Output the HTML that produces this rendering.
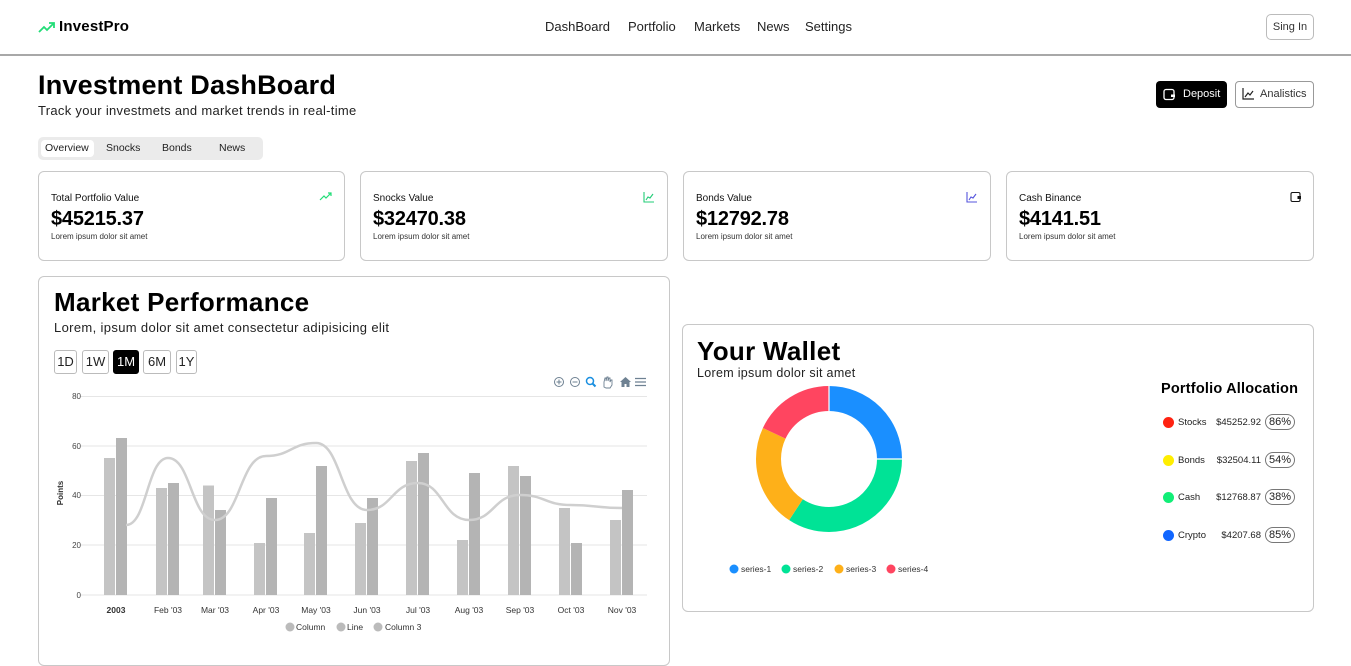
<!DOCTYPE html>
<html><head><meta charset="utf-8"><style>
*{box-sizing:border-box;margin:0;padding:0}
body{width:1351px;height:648px;overflow:hidden;background:#fff;font-family:"Liberation Sans",sans-serif;color:#000;position:relative}
.a{position:absolute}
.card{position:absolute;border:1px solid #c8c8c8;border-radius:6px;background:#fff}
.nav a{position:absolute;top:19px;font-size:13px;color:#222}
.t{font-size:10px;position:absolute;left:12px;top:21px;color:#111}
.v{font-size:20px;font-weight:bold;position:absolute;left:12px;top:36px;letter-spacing:-0.2px}
.s{font-size:8px;position:absolute;left:12px;top:60px;color:#333}
.rb{position:absolute;top:350px;height:24px;border:1px solid #bbb;border-radius:3px;font-size:13px;text-align:center;line-height:22px;color:#222}
.al{position:absolute;left:1163px;font-size:9.5px;color:#222;width:134px;height:18px}
.al i{position:absolute;left:0;top:2px;width:11px;height:11px;border-radius:50%}
.al .n{position:absolute;left:15px;top:2px}
.al .m{position:absolute;right:36px;top:2px}
.al .p{position:absolute;right:2px;top:-1px;border:1px solid #777;border-radius:9px;padding:1px 3px;font-size:11px}
</style></head><body>
<svg class="a" style="left:38px;top:20px" width="18" height="14" viewBox="0 0 18 14"><path d="M1 12 L6 7 L9 10 L16 3 M11 3 H16 V8" fill="none" stroke="#22dd77" stroke-width="1.8"/></svg>
<div class="a" style="left:59px;top:18px;font-size:15px;font-weight:bold;letter-spacing:0.2px">InvestPro</div>
<div class="nav"><a style="left:545px">DashBoard</a><a style="left:628px">Portfolio</a><a style="left:694px">Markets</a><a style="left:757px">News</a><a style="left:805px">Settings</a></div>
<div class="a" style="left:1266px;top:14px;width:48px;height:26px;border:1px solid #bbb;border-radius:5px;font-size:11px;text-align:center;line-height:24px;color:#333">Sing In</div>
<div class="a" style="left:0;top:54px;width:1351px;height:2px;background:#a8a8a8"></div>

<div class="a" style="left:38px;top:70px;font-size:27px;font-weight:bold;letter-spacing:0.2px">Investment DashBoard</div>
<div class="a" style="left:38px;top:103px;font-size:13px;color:#222;letter-spacing:0.3px">Track your investmets and market trends in real-time</div>
<div class="a" style="left:38px;top:137px;width:225px;height:23px;background:#ebebeb;border-radius:5px"></div>
<div class="a" style="left:41px;top:140px;width:53px;height:17px;background:#fff;border-radius:4px"></div>
<div class="a" style="left:45px;top:142px;font-size:10.5px;color:#222">Overview</div>
<div class="a" style="left:106px;top:142px;font-size:10.5px;color:#222">Snocks</div>
<div class="a" style="left:162px;top:142px;font-size:10.5px;color:#222">Bonds</div>
<div class="a" style="left:219px;top:142px;font-size:10.5px;color:#222">News</div>

<div class="a" style="left:1156px;top:81px;width:71px;height:27px;background:#000;border-radius:4px;color:#fff;font-size:11px;line-height:27px;padding-left:27px">Deposit</div>
<svg class="a" style="left:1163px;top:88px" width="13" height="13" viewBox="0 0 13 13"><rect x="1" y="1.5" width="10" height="10" rx="2" fill="none" stroke="#fff" stroke-width="1.3"/><path d="M8 6.5 H12 V9 H8 Z" fill="#fff"/></svg>
<div class="a" style="left:1235px;top:81px;width:79px;height:27px;border:1px solid #999;border-radius:4px;font-size:11px;line-height:25px;padding-left:24px;color:#333">Analistics</div>
<svg class="a" style="left:1242px;top:87px" width="13" height="13" viewBox="0 0 13 13"><path d="M1 1 V12 H12 M3 10 L6 6 L8 8 L11 4" fill="none" stroke="#222" stroke-width="1.2"/></svg>

<div class="card" style="left:38px;top:171px;width:307px;height:90px"><div class="t">Total Portfolio Value</div><div class="v">$45215.37</div><div class="s">Lorem ipsum dolor sit amet</div>
<svg class="a" style="left:280px;top:19px" width="14" height="11"><path d="M1 9 L5 5 L7 7 L12 2 M9 2 H12 V5" fill="none" stroke="#22dd77" stroke-width="1.2"/></svg></div>
<div class="card" style="left:360px;top:171px;width:308px;height:90px"><div class="t">Snocks Value</div><div class="v">$32470.38</div><div class="s">Lorem ipsum dolor sit amet</div>
<svg class="a" style="left:282px;top:19px" width="12" height="12"><path d="M1 1 V11 H11 M3 9 L5 6 L7 7 L10 3" fill="none" stroke="#22cc77" stroke-width="1.1"/></svg></div>
<div class="card" style="left:683px;top:171px;width:308px;height:90px"><div class="t">Bonds Value</div><div class="v">$12792.78</div><div class="s">Lorem ipsum dolor sit amet</div>
<svg class="a" style="left:282px;top:19px" width="12" height="12"><path d="M1 1 V11 H11 M3 9 L5 6 L7 7 L10 3" fill="none" stroke="#5555dd" stroke-width="1.1"/></svg></div>
<div class="card" style="left:1006px;top:171px;width:308px;height:90px"><div class="t">Cash Binance</div><div class="v">$4141.51</div><div class="s">Lorem ipsum dolor sit amet</div>
<svg class="a" style="left:283px;top:19px" width="12" height="12"><rect x="1" y="1.5" width="9" height="9" rx="1.5" fill="none" stroke="#111" stroke-width="1.1"/><rect x="7.5" y="5" width="3.5" height="3" fill="#111"/></svg></div>

<div class="card" style="left:38px;top:276px;width:632px;height:390px"></div>
<div class="a" style="left:54px;top:287px;font-size:26px;font-weight:bold;letter-spacing:0.3px">Market Performance</div>
<div class="a" style="left:54px;top:320px;font-size:13px;color:#222;letter-spacing:0.35px">Lorem, ipsum dolor sit amet consectetur adipisicing elit</div>
<div class="rb" style="left:54px;width:23px">1D</div>
<div class="rb" style="left:82px;width:27px">1W</div>
<div class="rb" style="left:113px;width:26px;background:#000;color:#fff;border-color:#000">1M</div>
<div class="rb" style="left:143px;width:28px">6M</div>
<div class="rb" style="left:176px;width:21px">1Y</div>

<svg class="a" style="left:0;top:0" width="700" height="648">
<g font-family="Liberation Sans,sans-serif" fill="#6e8192">
<circle cx="559" cy="382" r="4.5" fill="none" stroke="#6e8192"/><path d="M556.5 382h5M559 379.5v5" stroke="#6e8192"/>
<circle cx="575" cy="382" r="4.5" fill="none" stroke="#6e8192"/><path d="M572.5 382h5" stroke="#6e8192"/>
<circle cx="590" cy="381" r="3.5" fill="none" stroke="#1a8fe0" stroke-width="1.5"/><path d="M592.5 383.5l3 3" stroke="#1a8fe0" stroke-width="2"/>
<path d="M604 387v-5l1-4 1 0v3l1-4h1v4l1-3h1v4l1-2h1v5l-2 3h-4z" fill="none" stroke="#6e8192" stroke-width="0.9"/>
<path d="M620 382l5.5-5 5.5 5h-1.5v5h-3v-3h-2v3h-3v-5z"/>
<path d="M635 378.5h11M635 382h11M635 385.5h11" stroke="#6e8192" stroke-width="1.3"/>
</g>
<g stroke="#e6e6e6"><path d="M80 396.5H647M80 446H647M80 495.5H647M80 545H647M80 595H647"/></g>
<g font-size="8" fill="#444" font-family="Liberation Sans,sans-serif" text-anchor="end">
<text x="81" y="399">80</text><text x="81" y="449">60</text><text x="81" y="498">40</text><text x="81" y="548">20</text><text x="81" y="598">0</text></g>
<text transform="translate(63,493) rotate(-90)" font-size="8" font-weight="bold" fill="#333" text-anchor="middle" font-family="Liberation Sans,sans-serif">Points</text>
<g fill="#c4c4c4">
<rect x="104" y="458" width="11" height="137"/><rect x="156" y="488" width="11" height="107"/><rect x="203" y="485.5" width="11" height="109.5"/><rect x="254" y="543" width="11" height="52"/><rect x="304" y="533" width="11" height="62"/><rect x="355" y="523" width="11" height="72"/><rect x="406" y="461" width="11" height="134"/><rect x="457" y="540" width="11" height="55"/><rect x="508" y="466" width="11" height="129"/><rect x="559" y="508" width="11" height="87"/><rect x="610" y="520" width="11" height="75"/></g>
<g fill="#b4b4b4">
<rect x="116" y="438" width="11" height="157"/><rect x="168" y="483" width="11" height="112"/><rect x="215" y="510" width="11" height="85"/><rect x="266" y="498" width="11" height="97"/><rect x="316" y="466" width="11" height="129"/><rect x="367" y="498" width="11" height="97"/><rect x="418" y="453" width="11" height="142"/><rect x="469" y="473" width="11" height="122"/><rect x="520" y="476" width="11" height="119"/><rect x="571" y="543" width="11" height="52"/><rect x="622" y="490" width="11" height="105"/></g>
<path d="M126,525 C147,525 147,458 168,458 C191,458 191,520 215,520 C240,520 240,456 266,456 C291,456 291,443 316,443 C341,443 341,510 367,510 C392,510 392,483 418,483 C443,483 443,520 469,520 C494,520 494,495 520,495 C545,495 545,505 571,505 C596,505 596,508 622,508" fill="none" stroke="#cfcfcf" stroke-width="2.5"/>
<g font-size="8.5" fill="#333" font-family="Liberation Sans,sans-serif" text-anchor="middle">
<text x="116" y="613" font-weight="bold">2003</text><text x="168" y="613">Feb '03</text><text x="215" y="613">Mar '03</text><text x="266" y="613">Apr '03</text><text x="316" y="613">May '03</text><text x="367" y="613">Jun '03</text><text x="418" y="613">Jul '03</text><text x="469" y="613">Aug '03</text><text x="520" y="613">Sep '03</text><text x="571" y="613">Oct '03</text><text x="622" y="613">Nov '03</text></g>
<g font-size="8.5" fill="#333" font-family="Liberation Sans,sans-serif">
<circle cx="290" cy="627" r="4.5" fill="#bbb"/><text x="296" y="630">Column</text>
<circle cx="341" cy="627" r="4.5" fill="#bbb"/><text x="347" y="630">Line</text>
<circle cx="378" cy="627" r="4.5" fill="#bbb"/><text x="385" y="630">Column 3</text></g>
</svg>

<div class="card" style="left:682px;top:324px;width:632px;height:288px"></div>
<div class="a" style="left:697px;top:336px;font-size:26px;font-weight:bold;letter-spacing:0.3px">Your Wallet</div>
<div class="a" style="left:697px;top:366px;font-size:12.5px;color:#222;letter-spacing:0.3px">Lorem ipsum dolor sit amet</div>
<svg class="a" style="left:740px;top:370px" width="180" height="180">
<g transform="rotate(-90 89 89)" fill="none" stroke-width="25">
<circle cx="89" cy="89" r="60.5" stroke="#1a8fff" stroke-dasharray="95 285.1"/>
<circle cx="89" cy="89" r="60.5" stroke="#00e396" stroke-dasharray="0 95 129.9 155.2"/>
<circle cx="89" cy="89" r="60.5" stroke="#feb019" stroke-dasharray="0 224.9 86.6 68.6"/>
<circle cx="89" cy="89" r="60.5" stroke="#ff4560" stroke-dasharray="0 311.5 68.6 0"/>
</g>
<g stroke="#fff" stroke-width="1.2"><path d="M89 16V41M137 89H162"/></g>
</svg>
<svg class="a" style="left:725px;top:560px" width="240" height="18"><g font-size="8.5" fill="#333" font-family="Liberation Sans,sans-serif">
<circle cx="9" cy="9" r="4.5" fill="#1a8fff"/><text x="16" y="12">series-1</text>
<circle cx="61" cy="9" r="4.5" fill="#00e396"/><text x="68" y="12">series-2</text>
<circle cx="114" cy="9" r="4.5" fill="#feb019"/><text x="121" y="12">series-3</text>
<circle cx="166" cy="9" r="4.5" fill="#ff4560"/><text x="173" y="12">series-4</text></g></svg>

<div class="a" style="left:1161px;top:381px;font-size:14.5px;font-weight:bold;letter-spacing:0.2px">Portfolio Allocation</div>
<div class="al" style="top:415px"><i style="background:#f21"></i><span class="n">Stocks</span><span class="m">$45252.92</span><span class="p">86%</span></div>
<div class="al" style="top:453px"><i style="background:#fe0"></i><span class="n">Bonds</span><span class="m">$32504.11</span><span class="p">54%</span></div>
<div class="al" style="top:490px"><i style="background:#1e7"></i><span class="n">Cash</span><span class="m">$12768.87</span><span class="p">38%</span></div>
<div class="al" style="top:528px"><i style="background:#16f"></i><span class="n">Crypto</span><span class="m">$4207.68</span><span class="p">85%</span></div>
</body></html>
